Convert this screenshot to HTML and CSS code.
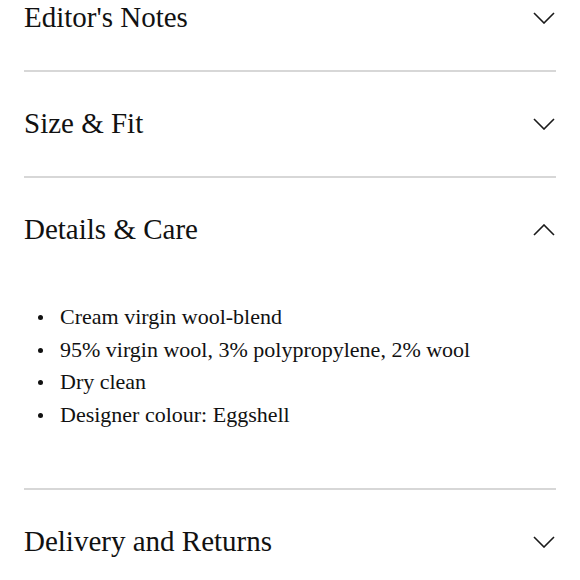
FILE: index.html
```html
<!DOCTYPE html>
<html lang="en">
<head>
<meta charset="utf-8">
<title>Product details</title>
<link rel="stylesheet" href="styles.css">
</head>
<body>
<div class="accordion">
  <section class="item">
    <div class="header">
      <h2 class="title">Editor's Notes</h2>
      <svg class="chev" viewBox="0 0 22 12" width="22" height="12"><polyline points="1,1 11,11 21,1"/></svg>
    </div>
  </section>
  <section class="item">
    <div class="header">
      <h2 class="title">Size &amp; Fit</h2>
      <svg class="chev" viewBox="0 0 22 12" width="22" height="12"><polyline points="1,1 11,11 21,1"/></svg>
    </div>
  </section>
  <section class="item open">
    <div class="header">
      <h2 class="title">Details &amp; Care</h2>
      <svg class="chev" viewBox="0 0 22 12" width="22" height="12"><polyline points="1,11 11,1 21,11"/></svg>
    </div>
    <div class="content">
      <ul class="list">
        <li>Cream virgin wool-blend</li>
        <li>95% virgin wool, 3% polypropylene, 2% wool</li>
        <li>Dry clean</li>
        <li>Designer colour: Eggshell</li>
      </ul>
    </div>
  </section>
  <section class="item">
    <div class="header">
      <h2 class="title">Delivery and Returns</h2>
      <svg class="chev" viewBox="0 0 22 12" width="22" height="12"><polyline points="1,1 11,11 21,1"/></svg>
    </div>
  </section>
</div>
</body>
</html>
```
FILE: styles.css
```css
html, body {
  margin: 0;
  padding: 0;
  background: #fff;
}
body {
  padding: 0 24px;
  font-family: "Liberation Serif", "Times New Roman", serif;
  color: #111;
  overflow: hidden;
}
.accordion {
  margin-top: -34px;
}
.item {
  border-bottom: 2px solid #d7d7d7;
}
.header {
  height: 104px;
  display: flex;
  align-items: center;
  justify-content: space-between;
}
.title {
  margin: 0;
  font-size: 29px;
  font-weight: normal;
  line-height: 1;
  position: relative;
  top: -1px;
}
.chev {
  display: block;
  margin-right: 1px;
}
.chev polyline {
  fill: none;
  stroke: #1a1a1a;
  stroke-width: 1.6;
}
.content {
  padding: 19px 0 57px;
}
.list {
  margin: 0;
  padding-left: 14px;
  list-style: none;
  font-size: 22px;
  line-height: 32.5px;
}
.list li::before {
  content: "";
  display: inline-block;
  width: 5px;
  height: 5px;
  border-radius: 50%;
  background: #111;
  vertical-align: middle;
  margin-right: 17px;
  position: relative;
  top: -1px;
}
```
